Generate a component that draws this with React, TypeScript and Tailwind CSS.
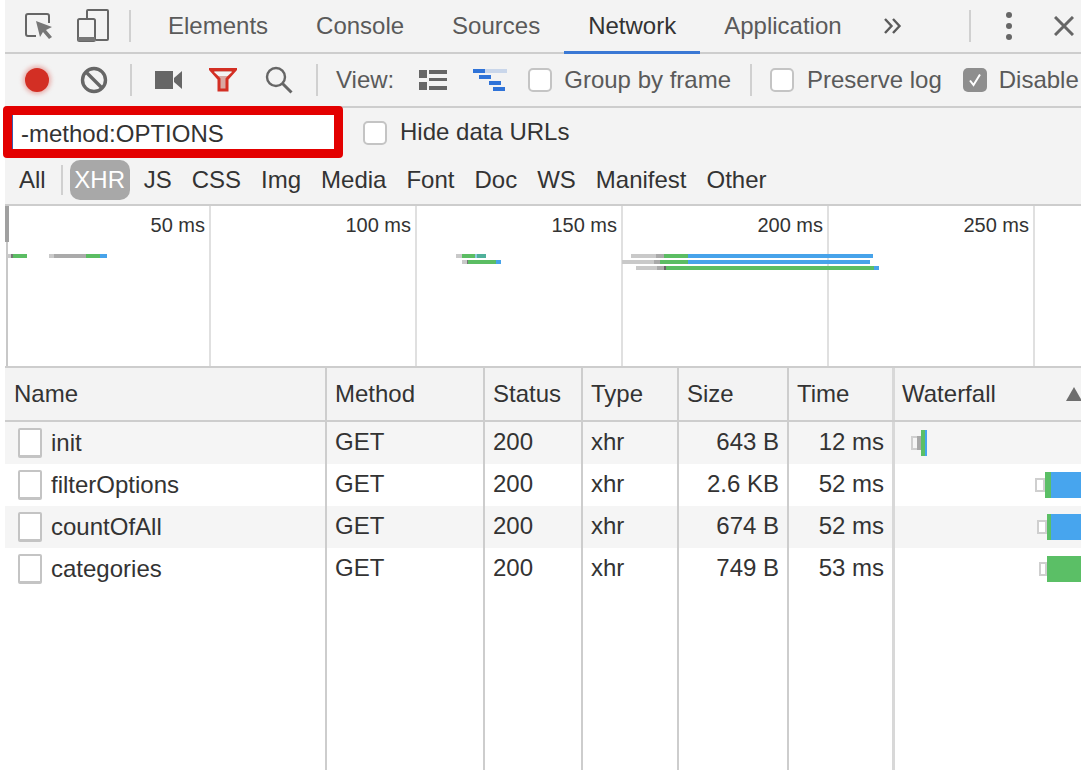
const tabs = [
  { label: "Elements" },
  { label: "Console" },
  { label: "Sources" },
  { label: "Network", active: true },
  { label: "Application" },
]

const types = ["JS", "CSS", "Img", "Media", "Font", "Doc", "WS", "Manifest", "Other"]

const rows = [
  { name: "init", size: "643 B", time: "12 ms", box: 906, box2: 10, shade: true, green: 4, blue: 2, start: 26 },
  { name: "filterOptions", size: "2.6 KB", time: "52 ms", box: 140, box2: 10, green: 6, blue: 30, start: 150 },
  { name: "countOfAll", size: "674 B", time: "52 ms", box: 142, box2: 10, green: 4, blue: 30, start: 152 },
  { name: "categories", size: "749 B", time: "53 ms", box: 144, box2: 8, green: 34, blue: 0, start: 152 },
]

// overview bars: [left, width, colour class]
const overviewBars: [number, number, number, string][] = [
  [254, 7, 4, "bg-[#c9c9c9]"],
  [254, 11, 2, "bg-[#777777]"],
  [254, 13, 14, "bg-[#5bbd63]"],
  [254, 49, 5, "bg-[#c9c9c9]"],
  [254, 54, 32, "bg-[#aaaaaa]"],
  [254, 86, 14, "bg-[#5bbd63]"],
  [254, 100, 7, "bg-[#47a3ea]"],
  [254, 456, 6, "bg-[#c9c9c9]"],
  [254, 462, 13, "bg-[#5bbd63]"],
  [254, 475, 2, "bg-[#8fc8e0]"],
  [254, 477, 9, "bg-[#4fb09a]"],
  [260, 462, 5, "bg-[#c9c9c9]"],
  [260, 467, 1, "bg-[#777777]"],
  [260, 468, 28, "bg-[#5bbd63]"],
  [260, 496, 5, "bg-[#47a3ea]"],
  [254, 631, 25, "bg-[#c9c9c9]"],
  [254, 656, 8, "bg-[#aaaaaa]"],
  [254, 664, 24, "bg-[#5bbd63]"],
  [254, 688, 185, "bg-[#47a3ea]"],
  [260, 622, 32, "bg-[#c9c9c9]"],
  [260, 654, 6, "bg-[#aaaaaa]"],
  [260, 660, 28, "bg-[#5bbd63]"],
  [260, 688, 182, "bg-[#47a3ea]"],
  [266, 636, 21, "bg-[#c9c9c9]"],
  [266, 657, 7, "bg-[#aaaaaa]"],
  [266, 664, 2, "bg-[#666666]"],
  [266, 666, 208, "bg-[#5bbd63]"],
  [266, 874, 5, "bg-[#47a3ea]"],
]

function Divider({ className = "" }: { className?: string }) {
  return <div className={"w-[2px] h-[32px] bg-[#d0d0d0] shrink-0 " + className} />
}

function Check({ checked = false, className = "" }: { checked?: boolean; className?: string }) {
  if (checked) {
    return (
      <div className={"w-[24px] h-[24px] rounded-[5px] bg-[#8e8e8e] flex items-center justify-center shrink-0 " + className}>
        <svg width="16" height="16" viewBox="0 0 16 16" fill="none">
          <path d="M3 8.5 L6.5 13 L13 2.5" stroke="#fff" strokeWidth="2" />
        </svg>
      </div>
    )
  }
  return <div className={"w-[24px] h-[24px] rounded-[5px] bg-white border-2 border-[#c4c4c4] shrink-0 " + className} />
}

export default function App() {
  return (
    <div className="w-[1081px] h-[770px] overflow-hidden bg-white pl-[5px] flex flex-col relative text-[24px] leading-[28px] text-[#333333] font-['Liberation_Sans',Arial,sans-serif]">
      {/* tab strip */}
      <div className="h-[54px] shrink-0 bg-[#f3f3f3] border-b-2 border-[#cdcdcd] flex items-center whitespace-nowrap">
        <svg width="28" height="28" viewBox="0 0 28 28" fill="none" className="ml-[20px] shrink-0">
          <path d="M11 24 H3 Q1 24 1 22 V4 Q1 2 3 2 H22 Q24 2 24 4 V11" stroke="#666" strokeWidth="2" />
          <path d="M11 9 L27 15 L21 18 L27 25 L24 27 L18 20 L15 25 Z" fill="#777" />
        </svg>
        <svg width="32" height="34" viewBox="0 0 32 34" fill="none" className="ml-[24px] shrink-0">
          <path d="M10 9 V2 Q10 1 11 1 H30 Q31 1 31 2 V30 Q31 31 30 31 H19" stroke="#666" strokeWidth="2" />
          <rect x="1" y="10" width="17" height="22" rx="1.5" stroke="#666" strokeWidth="2" />
          <rect x="1" y="28" width="17" height="4" fill="#777" />
        </svg>
        <Divider className="ml-[20px]" />
        <div className="flex ml-[13px] h-[52px]">
          {tabs.map((t) => (
            <div
              key={t.label}
              className={
                t.active
                  ? "px-[24px] h-[54px] leading-[52px] text-[#333333] border-b-[3px] border-[#3a78d4]"
                  : "px-[24px] h-[52px] leading-[52px] text-[#5a5a5a]"
              }
            >
              {t.label}
            </div>
          ))}
        </div>
        <svg width="20" height="16" viewBox="0 0 20 16" fill="none" className="ml-[17px] shrink-0">
          <path d="M2 1 L8.5 8 L2 15 M10 1 L16.5 8 L10 15" stroke="#5a5a5a" strokeWidth="2.4" />
        </svg>
        <Divider className="ml-[66px]" />
        <div className="ml-[35px] flex flex-col gap-[5px] shrink-0">
          <div className="w-[6px] h-[6px] rounded-full bg-[#666666]" />
          <div className="w-[6px] h-[6px] rounded-full bg-[#666666]" />
          <div className="w-[6px] h-[6px] rounded-full bg-[#666666]" />
        </div>
        <svg width="20" height="20" viewBox="0 0 20 20" fill="none" className="ml-[42px] shrink-0">
          <path d="M1 1 L19 19 M19 1 L1 19" stroke="#666" strokeWidth="3" />
        </svg>
      </div>

      {/* network toolbar */}
      <div className="h-[54px] shrink-0 bg-[#f3f3f3] border-b-2 border-[#cdcdcd] flex items-center whitespace-nowrap text-[#5a5a5a]">
        <div className="ml-[20px] w-[24px] h-[24px] rounded-full bg-[#d32f24] shadow-[0_0_4px_2px_rgba(211,47,36,0.35)] shrink-0" />
        <svg width="28" height="28" viewBox="0 0 28 28" fill="none" className="ml-[31px] shrink-0">
          <circle cx="14" cy="14" r="11.5" stroke="#666" strokeWidth="3.4" />
          <path d="M6 6 L22 22" stroke="#666" strokeWidth="3.4" />
        </svg>
        <Divider className="ml-[22px]" />
        <svg width="27" height="18" viewBox="0 0 27 18" className="ml-[23px] shrink-0">
          <rect x="0" y="0" width="18" height="18" fill="#666" />
          <path d="M19 7 L27 0 V18 L19 11 Z" fill="#666" />
        </svg>
        <svg width="28" height="24" viewBox="0 0 28 24" fill="none" className="ml-[27px] shrink-0">
          <path d="M1.5 1.5 H26.5 L18 11 V22 H10 V11 Z" fill="#d9a8a2" stroke="#d32f24" strokeWidth="3" />
          <path d="M5 4 H23 L18.5 8 H9.5 Z" fill="#f3f3f3" />
        </svg>
        <svg width="28" height="28" viewBox="0 0 28 28" fill="none" className="ml-[28px] shrink-0">
          <circle cx="11" cy="11" r="9" stroke="#666" strokeWidth="2.4" />
          <path d="M17 17 L26.5 26.5" stroke="#666" strokeWidth="3" />
        </svg>
        <Divider className="ml-[23px]" />
        <span className="ml-[18px]">View:</span>
        <svg width="28" height="20" viewBox="0 0 28 20" className="ml-[25px] shrink-0">
          <rect x="0" y="0" width="8" height="8" fill="#666" />
          <rect x="0" y="12" width="8" height="8" fill="#666" />
          <rect x="10" y="0" width="18" height="4" fill="#666" />
          <rect x="10" y="8" width="18" height="3" fill="#666" />
          <rect x="10" y="16" width="18" height="4" fill="#666" />
        </svg>
        <svg width="35" height="22" viewBox="0 0 35 22" className="ml-[26px] shrink-0">
          <rect x="0" y="0" width="34" height="4" fill="#c9d6ea" />
          <rect x="0" y="0" width="12" height="4" fill="#2f73d8" />
          <rect x="6" y="6" width="12" height="4" fill="#2f73d8" />
          <rect x="16" y="12" width="12" height="4" fill="#2f73d8" />
          <rect x="20" y="18" width="12" height="4" fill="#2f73d8" />
        </svg>
        <Check className="ml-[20px]" />
        <span className="ml-[12px]">Group by frame</span>
        <Divider className="ml-[19px]" />
        <Check className="ml-[18px]" />
        <span className="ml-[13px]">Preserve log</span>
        <Check checked className="ml-[21px]" />
        <span className="ml-[12px]">Disable cache</span>
      </div>

      {/* filter row */}
      <div className="h-[50px] shrink-0 bg-[#f3f3f3] flex items-center whitespace-nowrap">
        <div className="ml-[7px] w-[323px] h-[36px] bg-white border-l border-[#3a5bb0] pl-[8px] leading-[38px] text-[#333333] shrink-0">
          -method:OPTIONS
        </div>
        <Check className="ml-[28px]" />
        <span className="ml-[13px] -mt-[3px]">Hide data URLs</span>
      </div>

      {/* type filters */}
      <div className="h-[48px] shrink-0 bg-[#f3f3f3] border-b-2 border-[#cdcdcd] flex items-center whitespace-nowrap pb-[2px]">
        <span className="ml-[14px]">All</span>
        <div className="ml-[15px] w-[2px] h-[30px] bg-[#d0d0d0]" />
        <div className="ml-[7px] w-[60px] h-[40px] rounded-[10px] bg-[#a8a8a8] text-white text-center leading-[40px]">XHR</div>
        <div className="flex gap-[20px] ml-[14px]">
          {types.map((t) => (
            <span key={t}>{t}</span>
          ))}
        </div>
      </div>

      {/* overview */}
      <div className="h-[162px] shrink-0 border-b-2 border-[#cdcdcd] flex relative text-[20px] leading-[24px]">
        <div className="w-[2px] bg-[#c8c8c8] ml-[1px] shrink-0" />
        {["50 ms", "100 ms", "150 ms", "200 ms", "250 ms"].map((l, i) => (
          <div key={l} className={(i === 0 ? "w-[203px]" : "w-[206px]") + " shrink-0 border-r-2 border-[#e0e0e0] text-right pr-[4px] pt-[7px]"}>
            {l}
          </div>
        ))}
        <div className="absolute left-0 top-0 w-[4px] h-[36px] bg-[#a0a0a0]" />
      </div>
      {overviewBars.map(([top, left, w, c], i) => (
        <div key={i} className={"absolute h-[4px] " + c} style={{ top, left, width: w }} />
      ))}

      {/* request table */}
      <div className="h-[54px] shrink-0 bg-[#f3f3f3] border-b-2 border-[#cdcdcd] flex whitespace-nowrap leading-[52px]">
        <div className="w-[322px] pl-[9px] border-r-2 border-[#cdcdcd] shrink-0">Name</div>
        <div className="w-[158px] pl-[8px] border-r-2 border-[#cdcdcd] shrink-0">Method</div>
        <div className="w-[98px] pl-[8px] border-r-2 border-[#cdcdcd] shrink-0">Status</div>
        <div className="w-[96px] pl-[8px] border-r-2 border-[#cdcdcd] shrink-0">Type</div>
        <div className="w-[110px] pl-[8px] border-r-2 border-[#cdcdcd] shrink-0">Size</div>
        <div className="w-[106px] pl-[8px] border-r-[3px] border-[#d8d8d8] shrink-0">Time</div>
        <div className="flex-1 pl-[7px] flex items-center">
          Waterfall
          <div className="ml-auto mr-[-1px] w-0 h-0 border-l-[8px] border-r-[8px] border-b-[14px] border-l-transparent border-r-transparent border-b-[#6e6e6e]" />
        </div>
      </div>
      {rows.map((r, i) => (
        <div key={r.name} className={(i % 2 === 0 ? "bg-[#f5f5f5]" : "bg-white") + " h-[42px] shrink-0 flex whitespace-nowrap leading-[40px]"}>
          <div className="w-[322px] pl-[13px] border-r-2 border-[#cdcdcd] shrink-0 flex items-center">
            <div className="w-[24px] h-[30px] bg-white border-2 border-[#c4c4c4] border-b-[3px] rounded-[2px] shrink-0" />
            <span className="ml-[9px]">{r.name}</span>
          </div>
          <div className="w-[158px] pl-[8px] border-r-2 border-[#cdcdcd] shrink-0">GET</div>
          <div className="w-[98px] pl-[8px] border-r-2 border-[#cdcdcd] shrink-0">200</div>
          <div className="w-[96px] pl-[8px] border-r-2 border-[#cdcdcd] shrink-0">xhr</div>
          <div className="w-[110px] pr-[8px] text-right border-r-2 border-[#cdcdcd] shrink-0">{r.size}</div>
          <div className="w-[106px] pr-[8px] text-right border-r-[3px] border-[#d8d8d8] shrink-0">{r.time}</div>
          <div className="flex-1 relative overflow-hidden">
            <div
              className={"absolute top-[14px] h-[14px] border-2 border-[#cfcfcf] " + (r.shade ? "bg-[#f5f5f5]" : "bg-white")}
              style={{ left: i === 0 ? 16 : r.box, width: r.box2 }}
            />
            {r.shade && <div className="absolute top-[14px] h-[14px] w-[4px] left-[22px] bg-[#a8a8a8]" />}
            <div className="absolute top-[8px] h-[26px] bg-[#5bbf66]" style={{ left: r.start, width: r.green }} />
            {r.blue > 0 && (
              <div className="absolute top-[8px] h-[26px] bg-[#47a5ee]" style={{ left: r.start + r.green, width: r.blue }} />
            )}
          </div>
        </div>
      ))}
      <div className="flex-1 flex">
        <div className="w-[322px] border-r-2 border-[#cdcdcd] shrink-0" />
        <div className="w-[158px] border-r-2 border-[#cdcdcd] shrink-0" />
        <div className="w-[98px] border-r-2 border-[#cdcdcd] shrink-0" />
        <div className="w-[96px] border-r-2 border-[#cdcdcd] shrink-0" />
        <div className="w-[110px] border-r-2 border-[#cdcdcd] shrink-0" />
        <div className="w-[106px] border-r-[3px] border-[#d8d8d8] shrink-0" />
      </div>

      {/* red annotation round the filter input */}
      <div className="absolute left-[3px] top-[106px] w-[340px] h-[52px] border-[9px] border-[#e30000] rounded-[4px]" />
    </div>
  )
}
